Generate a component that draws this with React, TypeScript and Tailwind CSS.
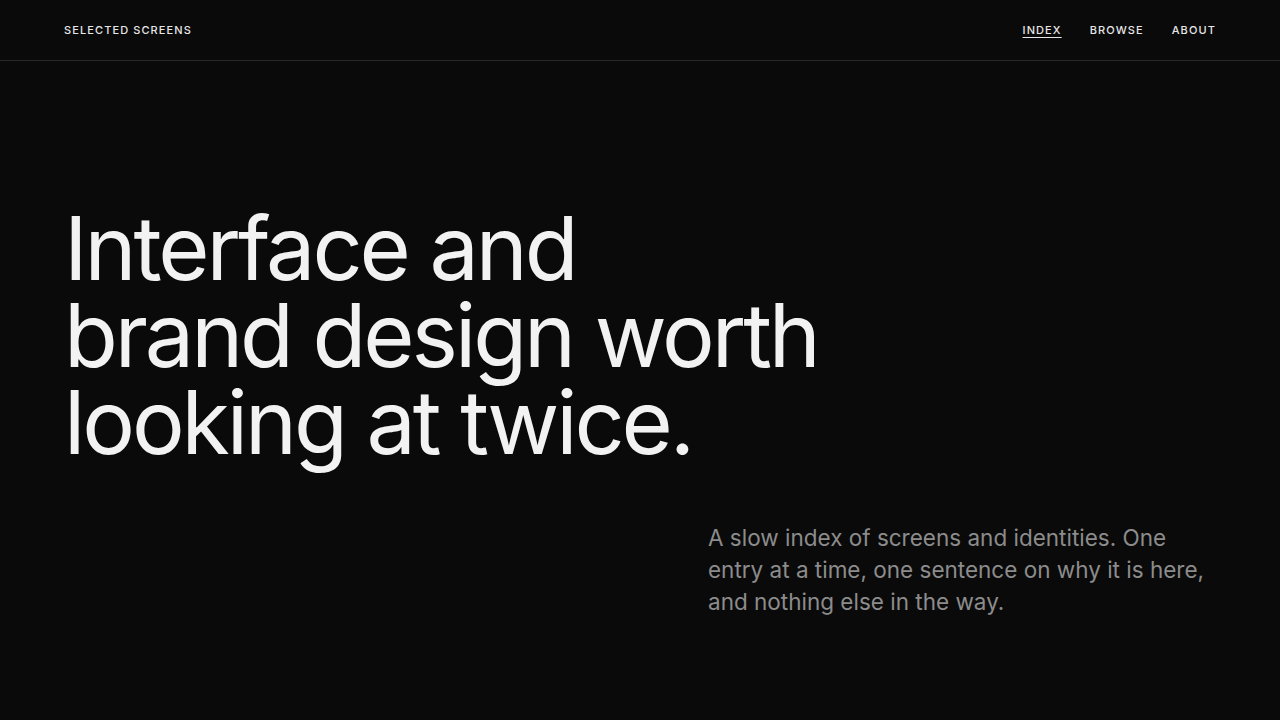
export default function App() {
  return (
    <main
      className="min-h-screen bg-[#0a0a0a] text-[#f2f2f2]"
      style={{ fontFamily: "Inter, 'Noto Sans', sans-serif" }}
    >
      <header className="h-[61px] border-b border-[#2a2a2a] px-16 flex items-center justify-between">
        <span className="text-[11px] font-medium tracking-[0.1em] text-[#e6e6e6]">SELECTED SCREENS</span>
        <nav className="flex items-center gap-7 text-[11px] font-medium tracking-[0.1em] text-[#e6e6e6]">
          <a className="underline underline-offset-[3px]">INDEX</a>
          <a>BROWSE</a>
          <a>ABOUT</a>
        </nav>
      </header>
      <section className="px-16 pt-[144px]">
        <h1 className="text-[88px] leading-[87px] tracking-[-0.035em] font-normal text-[#f2f2f2]">
          Interface and
          <br />
          brand design worth
          <br />
          looking at twice.
        </h1>
        <div className="flex justify-end mt-[56px]">
          <p className="w-[508px] text-[22.5px] leading-[32px] text-[#8c8c8c]">
            A slow index of screens and identities. One entry at a time, one sentence on why it is here, and nothing else in the way.
          </p>
        </div>
      </section>
    </main>
  );
}
